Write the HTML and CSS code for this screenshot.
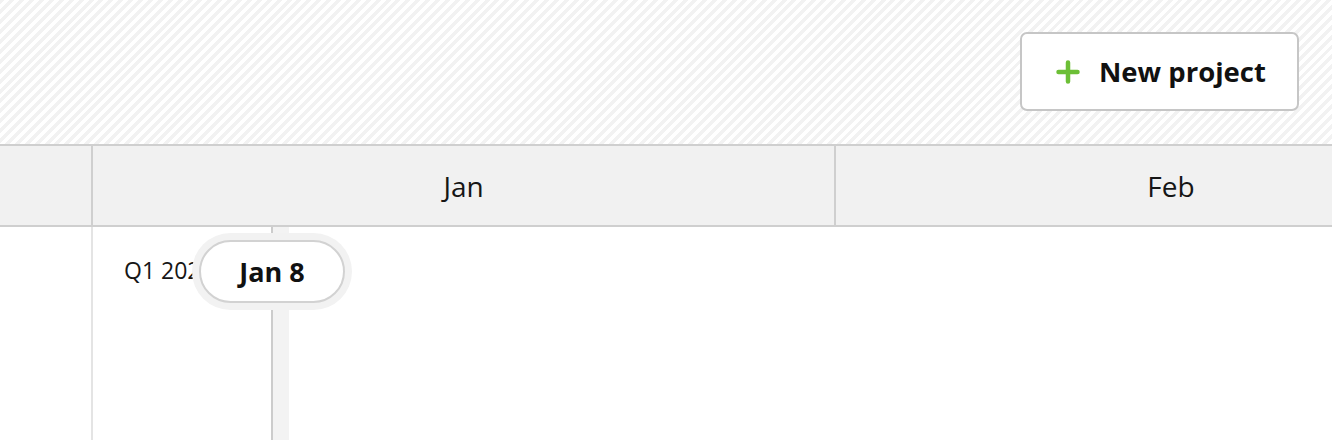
FILE: index.html
```html
<!DOCTYPE html>
<html lang="en">
<head>
<meta charset="utf-8">
<title>Timeline</title>
<link rel="stylesheet" href="styles.css">
</head>
<body>
<div class="page">
  <div class="toolbar">
    <button class="new-btn" type="button">
      <svg class="plus" width="24" height="24" viewBox="0 0 24 24" aria-hidden="true"><path d="M12 2.5v19M2.5 12h19" stroke="#6cbf36" stroke-width="4.5" stroke-linecap="round" fill="none"/></svg>
      <span>New project</span>
    </button>
  </div>
  <div class="timeline">
    <div class="head-row">
      <div class="side-cell"></div>
      <div class="month jan">Jan</div>
      <div class="month feb">Feb</div>
    </div>
    <div class="body-row">
      <div class="side-cell"></div>
      <div class="lane">
        <div class="quarter">Q1 2025</div>
      </div>
    </div>
    <div class="today-line"></div>
    <div class="today-pill">Jan 8</div>
  </div>
</div>
</body>
</html>
```

FILE: styles.css
```css
* { box-sizing: border-box; }
html, body { margin: 0; padding: 0; }
body {
  width: 1332px;
  height: 440px;
  overflow: hidden;
  background: #fff;
  font-family: "Open Sans", "Noto Sans", sans-serif;
  color: #161616;
}
.page { display: flex; flex-direction: column; height: 440px; }
.toolbar {
  height: 144px;
  flex: none;
  display: flex;
  align-items: center;
  justify-content: flex-end;
  padding-right: 33px;
  background: repeating-linear-gradient(135deg, #f2f2f2 0 3.5px, #ffffff 3.5px 7px);
}
.new-btn {
  display: flex;
  align-items: center;
  gap: 19px;
  width: 279px;
  height: 79px;
  padding: 0 0 0 34px;
  margin-top: -1px;
  background: #fff;
  border: 2px solid #c6c6c6;
  border-radius: 7px;
  font-family: inherit;
  font-size: 27.5px;
  font-weight: 700;
  color: #111;
}
.plus { flex: none; }
.timeline {
  position: relative;
  flex: 1;
  display: flex;
  flex-direction: column;
  overflow: hidden;
}
.head-row {
  display: flex;
  height: 83px;
  flex: none;
  overflow: hidden;
  border-top: 2px solid #cfcfcf;
  border-bottom: 2px solid #cfcfcf;
  background: #f1f1f1;
}
.side-cell { width: 93px; flex: none; border-right: 2px solid #cfcfcf; }
.month {
  flex: none;
  display: flex;
  align-items: center;
  justify-content: center;
  font-size: 28px;
  border-right: 2px solid #cfcfcf;
}
.jan { width: 743px; }
.feb { width: 672px; }
.body-row { flex: 1; display: flex; }
.body-row .side-cell { border-right-color: #e4e4e4; }
.lane { flex: 1; padding: 28px 0 0 31px; }
.quarter { font-size: 23px; line-height: 30px; }
.today-line {
  position: absolute;
  left: 271px;
  top: 83px;
  bottom: 0;
  width: 18px;
  border-left: 2px solid #cccccc;
  background: #f3f3f3;
}
.today-pill {
  position: absolute;
  left: 199px;
  top: 96px;
  width: 146px;
  height: 63px;
  display: flex;
  align-items: center;
  justify-content: center;
  background: #fff;
  border: 2px solid #d2d2d2;
  border-radius: 32px;
  box-shadow: 0 0 0 7px #f2f2f2;
  font-size: 27px;
  font-weight: 700;
  color: #111;
}
```
